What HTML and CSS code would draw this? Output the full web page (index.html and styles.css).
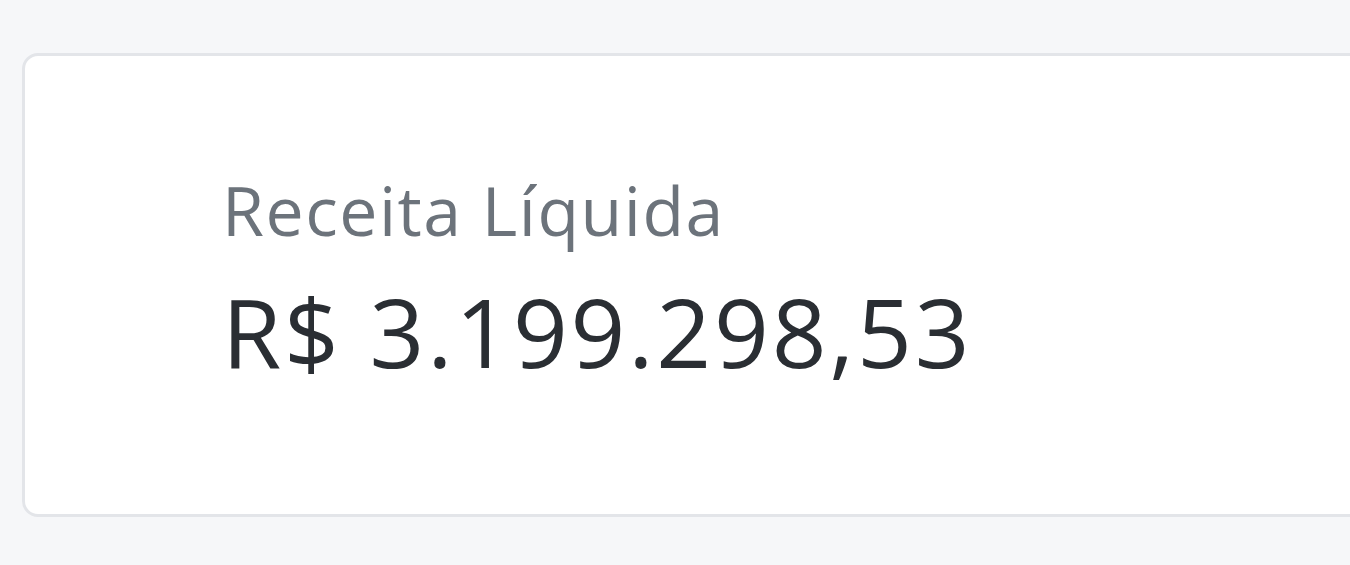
FILE: index.html
```html
<!DOCTYPE html>
<html lang="pt-BR">
<head>
    <meta charset="UTF-8">
    <meta name="viewport" content="width=device-width, initial-scale=1.0">
    <title>Receita Líquida</title>
    <link rel="stylesheet" href="styles.css">
</head>
<body>
    <div class="page">
        <div class="stat-card">
            <div class="stat-label">Receita Líquida</div>
            <div class="stat-value">R$ 3.199.298,53</div>
        </div>
    </div>
</body>
</html>
```

FILE: styles.css
```css
body {
    margin: 0;
    font-family: 'Open Sans', 'Noto Sans', sans-serif;
    background-color: #f6f7f9;
    overflow: hidden;
}

.page {
    padding: 53px 0 0 22px;
}

.stat-card {
    margin-right: -60px;
    height: 464px;
    box-sizing: border-box;
    padding: 113px 0 0 197px;
    background-color: #fff;
    border: 3px solid #e3e5e9;
    border-radius: 16px;
}

.stat-label {
    font-size: 68px;
    line-height: 1.2;
    letter-spacing: 1.5px;
    color: #6c737b;
}

.stat-value {
    margin-top: 22px;
    font-size: 96px;
    line-height: 1.2;
    letter-spacing: 2.8px;
    color: #2a2e33;
}
```
